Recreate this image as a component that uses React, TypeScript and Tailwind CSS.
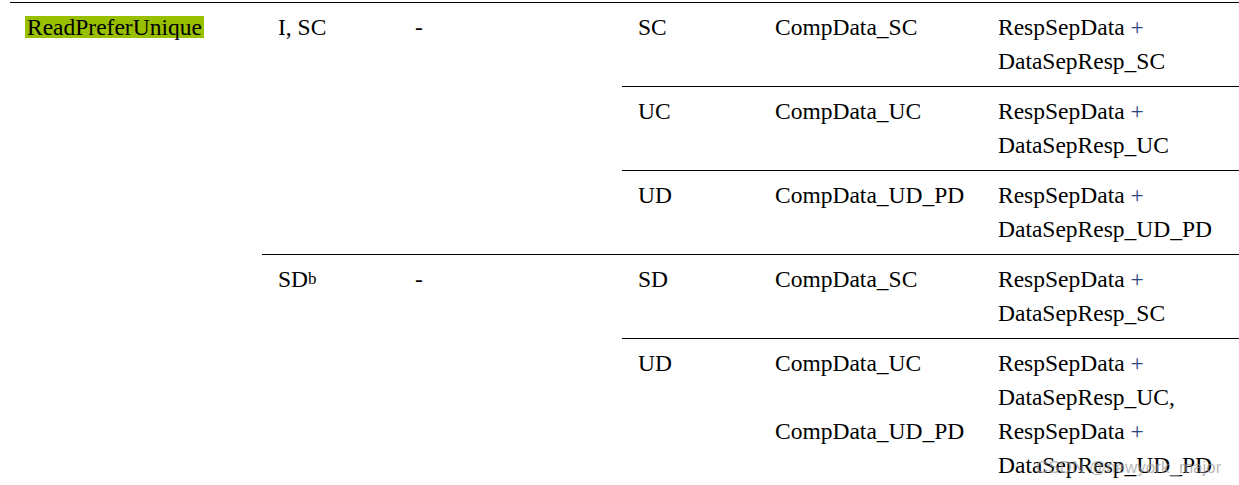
import React from "react";

const cell = "align-top pl-4 pr-2 pt-[7px] pb-[8px] leading-[34px]";
const topB = "border-t border-black";

function Plus() {
  return <span className="text-[#2a4486]">+</span>;
}

function Resp({ tail }: { tail: string }) {
  return (
    <>
      <div>
        RespSepData <Plus />
      </div>
      <div>{tail}</div>
    </>
  );
}

export default function App() {
  return (
    <div
      className="relative h-[485px] w-[1239px] overflow-hidden bg-white text-black"
      style={{ fontFamily: '"Liberation Serif", "Times New Roman", serif' }}
    >
      <div className="pt-[2px] pl-[10px]">
        <table className="table-fixed border-collapse text-[23.5px]" style={{ width: 1229 }}>
          <colgroup>
            <col className="w-[252px]" />
            <col className="w-[138px]" />
            <col className="w-[222px]" />
            <col className="w-[137px]" />
            <col className="w-[223px]" />
            <col className="w-[257px]" />
          </colgroup>
          <tbody>
            <tr>
              <td rowSpan={5} className={`${topB} align-top pl-[15px] pt-[7px] leading-[34px]`}>
                <span className="inline-block bg-[#99c000] px-[2px] leading-[22px]">ReadPreferUnique</span>
              </td>
              <td rowSpan={3} className={`${topB} ${cell}`}>I, SC</td>
              <td rowSpan={3} className={`${topB} ${cell} pl-[15px]`}>-</td>
              <td className={`${topB} ${cell}`}>SC</td>
              <td className={`${topB} ${cell}`}>CompData_SC</td>
              <td className={`${topB} ${cell}`}>
                <Resp tail="DataSepResp_SC" />
              </td>
            </tr>
            <tr>
              <td className={`${topB} ${cell}`}>UC</td>
              <td className={`${topB} ${cell}`}>CompData_UC</td>
              <td className={`${topB} ${cell}`}>
                <Resp tail="DataSepResp_UC" />
              </td>
            </tr>
            <tr>
              <td className={`${topB} ${cell}`}>UD</td>
              <td className={`${topB} ${cell}`}>CompData_UD_PD</td>
              <td className={`${topB} ${cell}`}>
                <Resp tail="DataSepResp_UD_PD" />
              </td>
            </tr>
            <tr>
              <td rowSpan={2} className={`${topB} ${cell}`}>
                SD<sup className="relative top-[-3px] text-[17px] leading-none">b</sup>
              </td>
              <td rowSpan={2} className={`${topB} ${cell} pl-[15px]`}>-</td>
              <td className={`${topB} ${cell}`}>SD</td>
              <td className={`${topB} ${cell}`}>CompData_SC</td>
              <td className={`${topB} ${cell}`}>
                <Resp tail="DataSepResp_SC" />
              </td>
            </tr>
            <tr>
              <td className={`${topB} ${cell}`}>UD</td>
              <td className={`${topB} ${cell}`}>
                <div>CompData_UC</div>
                <div className="h-[34px]" />
                <div>CompData_UD_PD</div>
              </td>
              <td className={`${topB} ${cell}`}>
                <Resp tail="DataSepResp_UC," />
                <Resp tail="DataSepResp_UD_PD" />
              </td>
            </tr>
          </tbody>
        </table>
      </div>
      <div
        className="pointer-events-none absolute left-[1036px] top-[455px] whitespace-nowrap text-[17px] text-[#9a9a9a]/70"
        style={{ fontFamily: '"Liberation Sans", Arial, sans-serif' }}
      >
        CSDN @newyork_major
      </div>
    </div>
  );
}
